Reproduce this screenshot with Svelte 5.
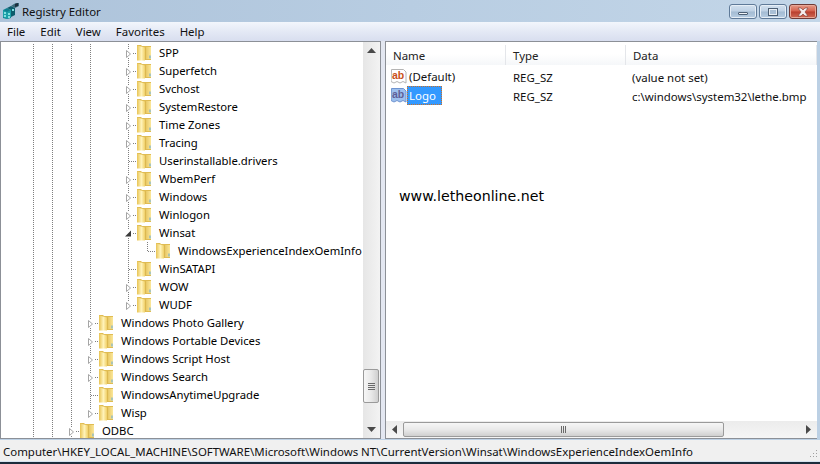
<script>
  const menus = ['File', 'Edit', 'View', 'Favorites', 'Help'];

  const A = [0, 1, 2, 3, -1];
  const B = [0, 1, 2];
  const rows = [
    { t: 'SPP', g: A, k: 'closed' },
    { t: 'Superfetch', g: A, k: 'closed' },
    { t: 'Svchost', g: A, k: 'closed' },
    { t: 'SystemRestore', g: A, k: 'closed' },
    { t: 'Time Zones', g: A, k: 'closed' },
    { t: 'Tracing', g: A, k: 'closed' },
    { t: 'Userinstallable.drivers', g: A, k: 'leaf' },
    { t: 'WbemPerf', g: A, k: 'closed' },
    { t: 'Windows', g: A, k: 'closed' },
    { t: 'Winlogon', g: A, k: 'closed' },
    { t: 'Winsat', g: A, k: 'open' },
    { t: 'WindowsExperienceIndexOemInfo', g: [0, 1, 2, 3, -1, 5], k: 'end' },
    { t: 'WinSATAPI', g: A, k: 'leaf' },
    { t: 'WOW', g: A, k: 'closed' },
    { t: 'WUDF', g: A, k: 'closed', last: true },
    { t: 'Windows Photo Gallery', g: B, k: 'closed' },
    { t: 'Windows Portable Devices', g: B, k: 'closed' },
    { t: 'Windows Script Host', g: B, k: 'closed' },
    { t: 'Windows Search', g: B, k: 'closed' },
    { t: 'WindowsAnytimeUpgrade', g: B, k: 'leaf' },
    { t: 'Wisp', g: B, k: 'closed', last: true },
    { t: 'ODBC', g: [0, 1], k: 'closed' }
  ];
</script>

<svg class="defs" aria-hidden="true">
  <defs>
    <linearGradient id="fl" x1="0" x2="1" y1="0" y2="0">
      <stop offset="0" stop-color="#e8c455" />
      <stop offset=".55" stop-color="#fff3ba" />
      <stop offset="1" stop-color="#f0d068" />
    </linearGradient>
    <linearGradient id="fr" x1="0" x2="1" y1="0" y2="0">
      <stop offset="0" stop-color="#e8c866" />
      <stop offset="1" stop-color="#fbe79a" />
    </linearGradient>
  </defs>
</svg>

<div class="window">
  <header class="titlebar">
    <svg class="appicon" width="18" height="18" viewBox="0 0 18 18">
      <path d="M1 8l4-2 4 2v8l-4 1-4-1z" fill="#0f7f8f" />
      <path d="M1 8l4 2v7l-4-2zM9 8l-4 2v7l4-2z" fill="#1a9fa8" />
      <path d="M5 6l4-2 4 2v7l-4 2V8z" fill="#0c5c6c" />
      <path d="M9 4l4 2 4-2v-3h-3l-2 1z" fill="#3a6a7a" />
      <path d="M2 10h2v2H2zM6 11h2v2H6zM2 13h2v2H2zM6 14h2v2H6zM10 7h2v2h-2z" fill="#7fe0e0" />
      <path d="M13 2l3-1v3l-3 1z" fill="#1c2c3c" />
    </svg>
    <span class="title">Registry Editor</span>
    <div class="caption">
      <div class="cbtn"><i class="min"></i></div>
      <div class="cbtn"><i class="max"></i></div>
      <div class="cbtn close">
        <svg width="14" height="10" viewBox="0 0 14 10"><path d="M2 1h3l2 2 2-2h3L9 5l3 4H9L7 7 5 9H2l3-4z" fill="#f4ecec" stroke="#7a3a34" stroke-width=".6" /></svg>
      </div>
    </div>
  </header>

  <nav class="menubar">
    {#each menus as m}
      <span>{m}</span>
    {/each}
  </nav>

  <main class="panes">
    <section class="tree">
      <div class="nodes">
        {#each rows as r}
          <div class="node">
            {#each r.g as g}
              <svg class="cell" width="19" height="18">
                {#if g >= 0}
                  <line x1="9.5" y1="0" x2="9.5" y2="18" class="dots" />
                {/if}
              </svg>
            {/each}
            <svg class="cell" width="19" height="18">
              {#if r.k === 'closed'}
                <line x1="9.5" y1="0" x2="9.5" y2={r.last ? 5 : 18} class="dots" />
                <line x1="14" y1="9.5" x2="19" y2="9.5" class="dots" />
                <rect x="5" y="5" width="9" height="9" fill="#fff" />
                <path d="M7.5 6.5v7l4-3.5z" fill="#fff" stroke="#a6a6a6" />
              {:else if r.k === 'open'}
                <line x1="9.5" y1="0" x2="9.5" y2="18" class="dots" />
                <line x1="14" y1="9.5" x2="19" y2="9.5" class="dots" />
                <rect x="5" y="5" width="9" height="9" fill="#fff" />
                <path d="M12 6.500v6H6z" fill="#3a3a3a" />
              {:else if r.k === 'leaf'}
                <line x1="9.5" y1="0" x2="9.5" y2="18" class="dots" />
                <line x1="10" y1="9.5" x2="19" y2="9.5" class="dots" />
              {:else}
                <line x1="9.5" y1="0" x2="9.5" y2="10" class="dots" />
                <line x1="10" y1="9.5" x2="19" y2="9.5" class="dots" />
              {/if}
            </svg>
            <svg class="folder" width="15" height="16" viewBox="0 0 15 16">
              <path d="M0 0h4l1 1h9v14H0z" fill="#e0bc52" />
              <path d="M9 2h5v12H9z" fill="url(#fr)" />
              <path d="M0 .500l8 2V15.500H0z" fill="url(#fl)" />
              <path d="M8 2.500h1V15H8z" fill="#dcb850" />
              <path d="M12.500 10.500h1v3h-1z" fill="#5fa8dc" />
            </svg>
            <span class="label">{r.t}</span>
          </div>
        {/each}
      </div>
      <div class="vscroll">
        <div class="sbtn"><svg width="9" height="5"><path d="M4.500 0l4.500 5H0z" fill="#4a4a4a" /></svg></div>
        <div class="vtrack">
          <div class="vthumb"><i></i><i></i><i></i><i></i></div>
        </div>
        <div class="sbtn"><svg width="9" height="5"><path d="M4.500 5L9 0H0z" fill="#4a4a4a" /></svg></div>
      </div>
    </section>

    <div class="splitter"></div>

    <section class="list">
      <div class="head">
        <div class="col name">Name</div>
        <div class="col type">Type</div>
        <div class="col data">Data</div>
      </div>
      <div class="item">
        <div class="name">
          <svg class="ab" width="16" height="17" viewBox="0 0 16 17">
            <path d="M.5 1.500h12l2.500 2.500v11l-3-1.500-3 1.500-3-1.500-3 1.500-3-1.500z" fill="#fff" stroke="#b4b4b4" />
            <text x="1" y="11" class="abtext" fill="#c9501a">ab</text>
          </svg>
          <span class="value">(Default)</span>
        </div>
        <div class="type">REG_SZ</div>
        <div class="data">(value not set)</div>
      </div>
      <div class="item">
        <div class="name">
          <svg class="ab" width="16" height="17" viewBox="0 0 16 17">
            <path d="M.5 1.500h12l2.500 2.500v11l-3-1.500-3 1.500-3-1.500-3 1.500-3-1.500z" fill="#9dc0ee" stroke="#6f94d0" />
            <text x="1" y="11" class="abtext" fill="#5f5f98">ab</text>
          </svg>
          <span class="value selected">Logo</span>
        </div>
        <div class="type">REG_SZ</div>
        <div class="data">c:\windows\system32\lethe.bmp</div>
      </div>
      <div class="spacer"></div>
      <div class="hscroll">
        <div class="hbtn"><svg width="5" height="9"><path d="M0 4.500L5 0v9z" fill="#4a4a4a" /></svg></div>
        <div class="hthumb"><i></i><i></i><i></i></div>
        <div class="htrack"></div>
        <div class="hbtn"><svg width="5" height="9"><path d="M5 4.500L0 0v9z" fill="#4a4a4a" /></svg></div>
      </div>
      <div class="watermark">www.letheonline.net</div>
    </section>
  </main>

  <footer class="status">
    <span>Computer\HKEY_LOCAL_MACHINE\SOFTWARE\Microsoft\Windows NT\CurrentVersion\Winsat\WindowsExperienceIndexOemInfo</span>
    <svg class="grip" width="11" height="11"><path d="M9 1h1v1H9zM6 4h1v1H6zM9 4h1v1H9zM3 7h1v1H3zM6 7h1v1H6zM9 7h1v1H9z" fill="#a0a0a0" /></svg>
  </footer>
  <div class="frame-bottom"></div>
</div>

<style>
  :global(body) {
    margin: 0;
    background: #fff;
    overflow: hidden;
  }

  .defs {
    position: absolute;
    width: 0;
    height: 0;
  }

  .window {
    width: 820px;
    height: 464px;
    display: flex;
    flex-direction: column;
    box-sizing: border-box;
    font-family: 'Noto Sans', sans-serif;
    font-size: 11.45px;
    color: #000;
    background: #bcd0e4;
    position: relative;
    overflow: hidden;
  }

  .titlebar {
    height: 22px;
    display: flex;
    align-items: center;
    padding-left: 2px;
    background: linear-gradient(90deg, #adc3da, #b8cde2 50%, #c3d6e8);
    flex: none;
  }

  .title {
    margin-left: 2px;
    color: #111;
  }

  .appicon {
    flex: none;
  }

  .caption {
    margin-left: auto;
    margin-right: 3px;
    margin-top: 1px;
    display: flex;
    gap: 2px;
    align-self: flex-start;
    padding-top: 3px;
  }

  .cbtn {
    width: 28px;
    height: 15px;
    box-sizing: border-box;
    border: 1px solid #5f7a98;
    border-radius: 3px;
    display: flex;
    align-items: center;
    justify-content: center;
    background: linear-gradient(#d2e0ee, #bed1e4 48%, #a3bbd3 52%, #b7cde2);
    box-shadow: inset 0 0 0 1px #e6eef6;
  }

  .cbtn.close {
    border-color: #6e3a36;
    background: linear-gradient(#e49a88, #d4604c 48%, #b83e2e 52%, #cf6a55);
    box-shadow: inset 0 0 0 1px #e8a898;
  }

  .min {
    width: 10px;
    height: 3px;
    margin-top: 4px;
    background: #f0f3f7;
    border: 1px solid #4c5f74;
    border-radius: 1px;
    box-sizing: border-box;
  }

  .max {
    width: 10px;
    height: 8px;
    box-sizing: border-box;
    border: 2px solid #e8eef4;
    outline: 1px solid #4c5f74;
    outline-offset: -1px;
    background: #aac0d6;
  }

  .menubar {
    height: 19px;
    flex: none;
    display: flex;
    align-items: center;
    gap: 15px;
    padding-left: 7px;
    background: linear-gradient(#f2f6fc, #e4e9f5 50%, #d8deef);
    color: #111;
  }

  .panes {
    flex: 1;
    min-height: 0;
    display: flex;
    background: #e3e7f1;
    margin-right: 3px;
  }

  .tree {
    width: 381px;
    flex: none;
    display: flex;
    box-sizing: border-box;
    border: 1px solid #8c9097;
    background: #fff;
    overflow: hidden;
  }

  .nodes {
    flex: 1;
    min-width: 0;
    padding: 1px 0 0 23px;
    overflow: hidden;
    background: #fff;
  }

  .node {
    height: 18px;
    display: flex;
    align-items: center;
    white-space: nowrap;
  }

  .cell {
    flex: none;
    display: block;
    margin-top: 2px;
  }

  .dots {
    stroke: #7f7f7f;
    stroke-width: 1;
    stroke-dasharray: 1 1;
    shape-rendering: crispEdges;
  }

  .folder {
    flex: none;
    margin-left: -1px;
    margin-top: 2px;
  }

  .label {
    margin-left: 7px;
    font-size: 11.3px;
  }

  .vscroll {
    width: 17px;
    flex: none;
    display: flex;
    flex-direction: column;
    background: linear-gradient(90deg, #e6e6e6, #f3f3f3);
  }

  .sbtn {
    height: 17px;
    flex: none;
    display: flex;
    align-items: center;
    justify-content: center;
  }

  .vtrack {
    flex: 1;
    padding: 310px 1px 0 0;
  }

  .vthumb {
    height: 34px;
    box-sizing: border-box;
    border: 1px solid #9a9a9a;
    border-radius: 2px;
    background: linear-gradient(90deg, #f6f6f6, #e9e9e9 50%, #cfcfcf);
    display: flex;
    flex-direction: column;
    align-items: center;
    justify-content: center;
    gap: 1px;
  }

  .vthumb i {
    width: 7px;
    height: 1px;
    background: #6a6a6a;
  }

  .splitter {
    width: 4px;
    flex: none;
  }

  .list {
    flex: 1;
    min-width: 0;
    display: flex;
    flex-direction: column;
    box-sizing: border-box;
    border: solid #8c9097;
    border-width: 1px 0 1px 1px;
    background: #fff;
    position: relative;
    padding-top: 3px;
  }

  .head,
  .item {
    display: grid;
    grid-template-columns: 120px 120px 1fr;
    flex: none;
  }

  .head {
    height: 20px;
    align-items: center;
    background: linear-gradient(#fff 45%, #f5f7f9);
    color: #222;
    margin-bottom: 2px;
  }

  .col {
    height: 100%;
    display: flex;
    align-items: center;
    padding-left: 7px;
    border-right: 1px solid #e4e6ea;
    box-sizing: border-box;
  }

  .item {
    height: 19px;
    align-items: center;
    color: #111;
  }

  .item .type,
  .item .data {
    padding: 1px 0 0 7px;
  }

  .item .data {
    padding-left: 6px;
  }

  .item .name {
    display: flex;
    align-items: center;
    padding-left: 5px;
  }

  .ab {
    flex: none;
  }

  .abtext {
    font-family: 'Liberation Sans', sans-serif;
    font-weight: 700;
    font-size: 10.500px;
  }

  .value {
    padding: 1px 3px 0 2px;
    height: 19px;
    line-height: 18px;
    box-sizing: border-box;
  }

  .selected {
    background: #3399ff;
    color: #fff;
    outline: 1px dotted #c9702a;
    outline-offset: -1px;
    padding: 1px 6px 0 2px;
  }

  .spacer {
    flex: 1;
  }

  .hscroll {
    height: 17px;
    flex: none;
    display: flex;
    align-items: center;
    background: linear-gradient(#ececec, #f5f5f5);
  }

  .hbtn {
    width: 17px;
    height: 17px;
    flex: none;
    display: flex;
    align-items: center;
    justify-content: center;
  }

  .hthumb {
    width: 321px;
    height: 15px;
    flex: none;
    box-sizing: border-box;
    border: 1px solid #9a9a9a;
    border-radius: 2px;
    background: linear-gradient(#f6f6f6, #e9e9e9 50%, #cfcfcf);
    display: flex;
    align-items: center;
    justify-content: center;
    gap: 1px;
  }

  .hthumb i {
    width: 1px;
    height: 7px;
    background: #6a6a6a;
  }

  .htrack {
    flex: 1;
  }

  .watermark {
    position: absolute;
    left: 13px;
    top: 145px;
    font-family: 'DejaVu Sans', sans-serif;
    font-size: 14.2px;
    line-height: 18px;
    color: #000;
  }

  .status {
    height: 21px;
    flex: none;
    display: flex;
    align-items: center;
    padding: 1px 0 0 3px;
    box-sizing: border-box;
    background: #f0f0f0;
    color: #111;
    position: relative;
    margin-top: 1px;
    white-space: nowrap;
  }

  .grip {
    position: absolute;
    right: 2px;
    bottom: 1px;
  }

  .frame-bottom {
    height: 3px;
    flex: none;
    background: linear-gradient(#d5e2ef 0, #d5e2ef 1px, #1c2c3c 1px);
  }
</style>
